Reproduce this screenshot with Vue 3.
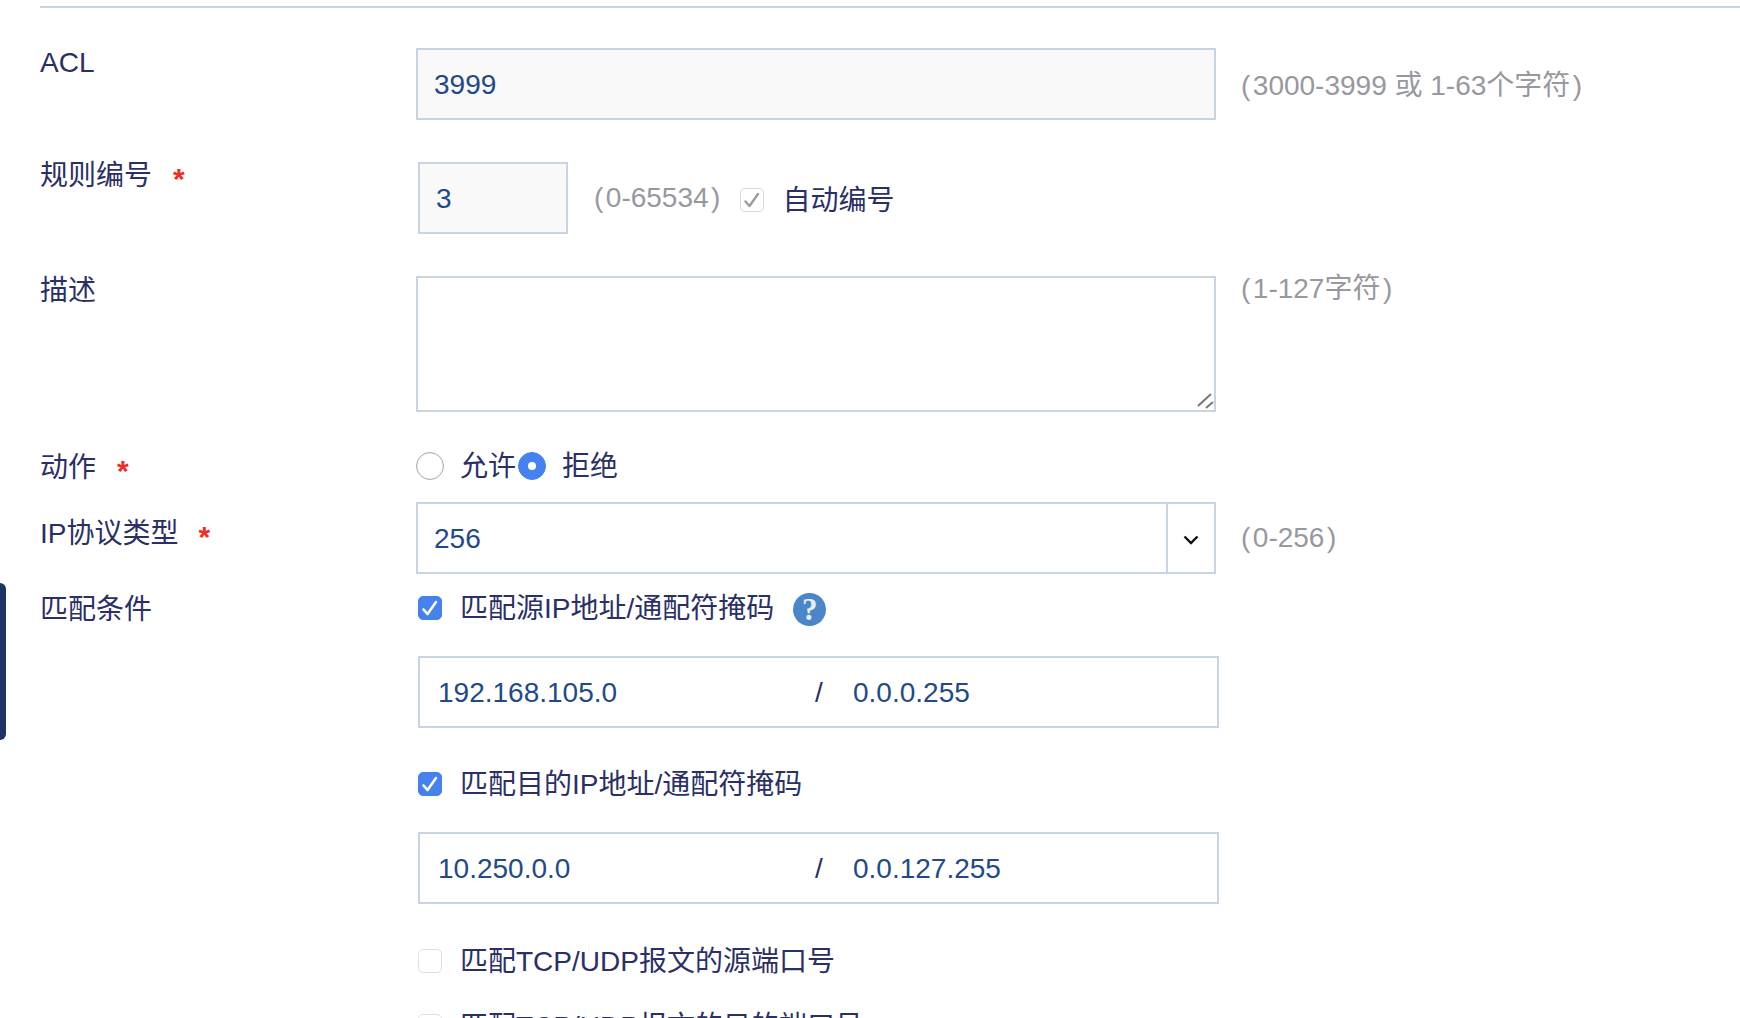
<script setup>
const checkPath = 'M5.5 13.5 L9.5 18 L18 6'
</script>

<template>
  <div class="page">
    <div class="side-tab"></div>
    <div class="form">
      <div class="row row-acl">
        <div class="label">ACL</div>
        <div class="control">
          <input class="field readonly wide" value="3999" readonly />
          <span class="help help-acl"><span class="po">(</span>3000-3999 或 1-63个字符<span class="pc">)</span></span>
        </div>
      </div>

      <div class="row row-rule">
        <div class="label">规则编号<span class="req">*</span></div>
        <div class="control shift">
          <input class="field readonly small" value="3" readonly />
          <span class="help"><span class="po">(</span>0-65534<span class="pc">)</span></span>
          <label class="check auto">
            <span class="box disabled">
              <svg viewBox="0 0 24 24" width="24" height="24"><path :d="checkPath" /></svg>
            </span>
            <span class="text">自动编号</span>
          </label>
        </div>
      </div>

      <div class="row row-desc">
        <div class="label">描述</div>
        <div class="control top">
          <div class="area-wrap">
            <textarea class="area"></textarea>
            <svg class="grip" viewBox="0 0 20 20" width="20" height="20">
              <path d="M2 14 L15 2 M10 16 L17 10" />
            </svg>
          </div>
          <span class="help help-top"><span class="po">(</span>1-127字符<span class="pc">)</span></span>
        </div>
      </div>

      <div class="row row-action">
        <div class="label">动作<span class="req">*</span></div>
        <div class="control radios">
          <label class="radio">
            <span class="dot"></span>
            <span class="text">允许</span>
          </label>
          <label class="radio">
            <span class="dot on"></span>
            <span class="text">拒绝</span>
          </label>
        </div>
      </div>

      <div class="row row-proto">
        <div class="label">IP协议类型<span class="req">*</span></div>
        <div class="control">
          <div class="select">
            <span class="select-value">256</span>
            <span class="select-arrow">
              <svg viewBox="0 0 16 12" width="16" height="12"><path d="M1.5 2.5 L8 9 L14.5 2.5" /></svg>
            </span>
          </div>
          <span class="help"><span class="po">(</span>0-256<span class="pc">)</span></span>
        </div>
      </div>

      <div class="row row-match">
        <div class="label">匹配条件</div>
        <div class="match-list">
          <label class="check">
            <span class="box on">
              <svg viewBox="0 0 24 24" width="24" height="24"><path :d="checkPath" /></svg>
            </span>
            <span class="text">匹配源IP地址/通配符掩码</span>
            <span class="qmark">?</span>
          </label>
          <div class="pair">
            <span class="pair-a">192.168.105.0</span>
            <span class="pair-sep">/</span>
            <span class="pair-b">0.0.0.255</span>
          </div>

          <label class="check">
            <span class="box on">
              <svg viewBox="0 0 24 24" width="24" height="24"><path :d="checkPath" /></svg>
            </span>
            <span class="text">匹配目的IP地址/通配符掩码</span>
          </label>
          <div class="pair">
            <span class="pair-a">10.250.0.0</span>
            <span class="pair-sep">/</span>
            <span class="pair-b">0.0.127.255</span>
          </div>

          <label class="check gap-big">
            <span class="box"></span>
            <span class="text">匹配TCP/UDP报文的源端口号</span>
          </label>
          <label class="check last">
            <span class="box"></span>
            <span class="text">匹配TCP/UDP报文的目的端口号</span>
          </label>
        </div>
      </div>
    </div>
  </div>
</template>

<style scoped>
.page {
  position: relative;
  height: 1018px;
  overflow: hidden;
  background: #fff;
  font-family: "Liberation Sans", "Noto Sans CJK SC", sans-serif;
  font-size: 28px;
  color: #2a2f66;
}
.side-tab {
  position: absolute;
  left: 0;
  top: 583px;
  width: 6px;
  height: 157px;
  background: #1f3264;
  border-radius: 0 6px 6px 0;
}
.form {
  margin-left: 40px;
  padding-top: 6px;
  display: flex;
  flex-direction: column;
}
.form::before {
  content: "";
  display: block;
  height: 2px;
  background: #c8d4e4;
}
.row {
  display: flex;
  align-items: flex-start;
}
.label {
  width: 376px;
  flex: none;
  line-height: 40px;
}
.req {
  color: #ee2d24;
  margin-left: 21px;
  font-size: 30px;
  font-weight: 700;
  position: relative;
  top: 4px;
}
.control {
  display: flex;
  align-items: center;
}
.control.top {
  align-items: flex-start;
}
.control.shift {
  margin-left: 2px;
}
.field {
  box-sizing: border-box;
  height: 72px;
  border: 2px solid #c8d4e4;
  padding: 2px 16px 0;
  font: inherit;
  color: #1f4a8a;
  background: #fff;
  outline: none;
  border-radius: 0;
}
.readonly {
  background: #f9f9f9;
}
.wide {
  width: 800px;
}
.small {
  width: 150px;
}
.help {
  color: #98989f;
  margin-left: 25px;
  white-space: nowrap;
}
.po {
  margin-right: 2.5px;
}
.pc {
  margin-left: 2.5px;
}
.help-acl {
  margin-top: -2px;
}
.help-top {
  line-height: 26px;
}
.row-acl {
  margin-top: 40px;
}
.row-acl .label {
  line-height: 30px;
}
.row-rule {
  margin-top: 42px;
}
.row-rule .label {
  line-height: 26px;
}
.row-rule .help {
  margin-left: 26px;
}
.check {
  display: flex;
  align-items: center;
  line-height: 32px;
}
.check .text,
.radio .text {
  padding-top: 2px;
}
.auto {
  margin-left: 20px;
  margin-top: 4px;
}
.box {
  box-sizing: border-box;
  width: 24px;
  height: 24px;
  flex: none;
  border: 1px solid #dcdfe6;
  border-radius: 5px;
  background: #fff;
  margin-right: 18px;
  display: block;
  overflow: hidden;
}
.box svg {
  display: block;
  margin: -1px;
  fill: none;
  stroke: #fff;
  stroke-width: 2.6;
  stroke-linecap: round;
  stroke-linejoin: round;
}
.box.on {
  background: #4682ee;
  border-color: #4682ee;
}
.box.disabled {
  border-color: #d8d8dc;
  background: #fff;
}
.box.disabled svg {
  stroke: #9c9ca2;
  stroke-width: 2.4;
}
.row-desc {
  margin-top: 42px;
}
.row-desc .label {
  line-height: 30px;
}
.area-wrap {
  position: relative;
  width: 800px;
  height: 136px;
}
.area {
  box-sizing: border-box;
  width: 800px;
  height: 136px;
  border: 2px solid #c8d4e4;
  border-radius: 0;
  outline: none;
  background: #fff;
  display: block;
  resize: none;
}
.grip {
  position: absolute;
  right: 0;
  bottom: 0;
  fill: none;
  stroke: #777;
  stroke-width: 2;
}
.row-action {
  margin-top: 40px;
  height: 28px;
  align-items: center;
}
.row-action .label {
  margin-top: 2px;
}
.radios {
  display: flex;
}
.radio {
  display: flex;
  align-items: center;
  line-height: 28px;
}
.dot {
  box-sizing: border-box;
  width: 28px;
  height: 28px;
  border: 1px solid #ababb0;
  border-radius: 50%;
  background: #fff;
  margin-right: 16px;
  position: relative;
  box-shadow: inset 0 0 2px rgba(0, 0, 0, 0.15);
}
.radio + .radio {
  margin-left: 2px;
}
.dot.on {
  background: #4682ee;
  border-color: #4682ee;
  box-shadow: none;
}
.dot.on::after {
  content: "";
  position: absolute;
  left: 9px;
  top: 9px;
  width: 8px;
  height: 8px;
  border-radius: 50%;
  background: #fff;
}
.row-proto {
  margin-top: 22px;
}
.row-proto .label {
  line-height: 62px;
}
.row-proto .req {
  margin-left: 20px;
}
.select {
  box-sizing: border-box;
  width: 800px;
  height: 72px;
  border: 2px solid #c8d4e4;
  display: flex;
  align-items: center;
  color: #1f4a8a;
}
.select-value {
  flex: 1;
  padding: 2px 0 0 16px;
}
.select-arrow {
  box-sizing: border-box;
  width: 48px;
  height: 100%;
  border-left: 2px solid #c8d4e4;
  display: flex;
  align-items: center;
  justify-content: center;
}
.select-arrow svg {
  margin-top: 3px;
  fill: none;
  stroke: #111;
  stroke-width: 2.4;
}
.row-match {
  margin-top: 14px;
}
.match-list {
  display: flex;
  flex-direction: column;
  margin-left: 2px;
}
.row-match .label {
  line-height: 44px;
}
.match-list .check {
  height: 40px;
}
.qmark {
  box-sizing: border-box;
  width: 33px;
  height: 33px;
  border-radius: 50%;
  background: #4a86c8;
  color: #e6eef8;
  font-family: "Liberation Serif", serif;
  font-weight: 700;
  font-size: 31px;
  line-height: 34px;
  text-align: center;
  margin: 2px 0 0 19px;
}
.pair {
  box-sizing: border-box;
  width: 801px;
  height: 72px;
  border: 2px solid #c8d4e4;
  margin-top: 28px;
  margin-bottom: 36px;
  padding: 2px 0 0 18px;
  display: flex;
  align-items: center;
  color: #1f4a8a;
}
.pair-a {
  width: 377px;
  flex: none;
}
.pair-sep {
  width: 38px;
  flex: none;
  color: #2a2f66;
}
.gap-big {
  margin-top: 1px;
}
.last {
  margin-top: 25px;
}
</style>

<style>
html, body {
  margin: 0;
  overflow: hidden;
  background: #fff;
}
</style>
